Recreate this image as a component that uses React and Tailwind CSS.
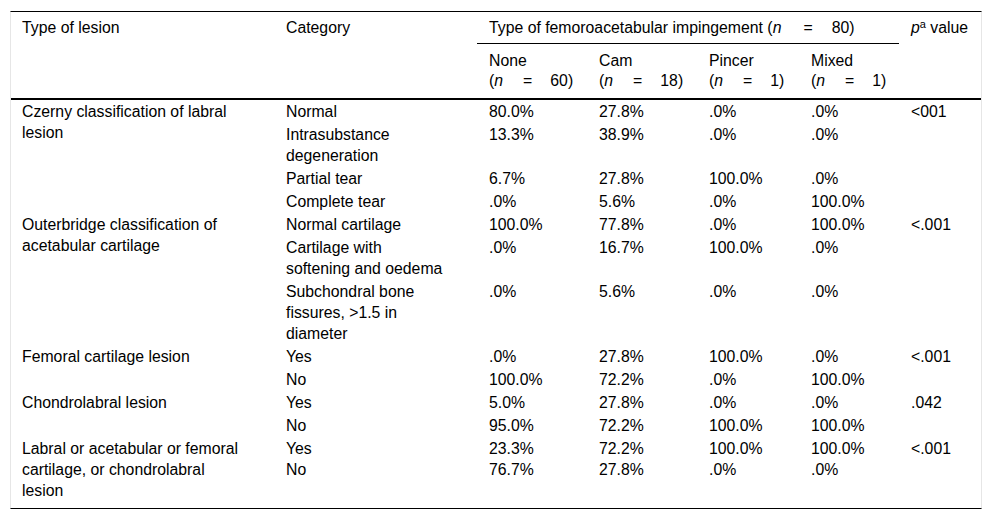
import React from "react";

const groups = [
  {
    label: ["Czerny classification of labral", "lesion"],
    p: "<001",
    rows: [
      [["Normal"], "80.0%", "27.8%", ".0%", ".0%"],
      [["Intrasubstance", "degeneration"], "13.3%", "38.9%", ".0%", ".0%"],
      [["Partial tear"], "6.7%", "27.8%", "100.0%", ".0%"],
      [["Complete tear"], ".0%", "5.6%", ".0%", "100.0%"],
    ],
  },
  {
    label: ["Outerbridge classification of", "acetabular cartilage"],
    p: "<.001",
    rows: [
      [["Normal cartilage"], "100.0%", "77.8%", ".0%", "100.0%"],
      [["Cartilage with", "softening and oedema"], ".0%", "16.7%", "100.0%", ".0%"],
      [["Subchondral bone", "fissures, >1.5 in", "diameter"], ".0%", "5.6%", ".0%", ".0%"],
    ],
  },
  {
    label: ["Femoral cartilage lesion"],
    p: "<.001",
    rows: [
      [["Yes"], ".0%", "27.8%", "100.0%", ".0%"],
      [["No"], "100.0%", "72.2%", ".0%", "100.0%"],
    ],
  },
  {
    label: ["Chondrolabral lesion"],
    p: ".042",
    rows: [
      [["Yes"], "5.0%", "27.8%", ".0%", ".0%"],
      [["No"], "95.0%", "72.2%", "100.0%", "100.0%"],
    ],
  },
  {
    label: ["Labral or acetabular or femoral", "cartilage, or chondrolabral", "lesion"],
    p: "<.001",
    last: true,
    rows: [
      [["Yes"], "23.3%", "72.2%", "100.0%", "100.0%"],
      [["No"], "76.7%", "27.8%", ".0%", ".0%"],
    ],
  },
];

function Lines({ lines }) {
  return (
    <>
      {lines.map((l, i) => (
        <div key={i} className="whitespace-nowrap">
          {l}
        </div>
      ))}
    </>
  );
}

function NCount({ v, a = 20, b = 18 }) {
  return (
    <span className="whitespace-nowrap">
      (<i>n</i>
      <span className="inline-block" style={{ marginLeft: a + "px", marginRight: b + "px" }}>
        =
      </span>
      {v})
    </span>
  );
}

function Group({ g }) {
  return (
    <div className={`flex ${g.last ? "pb-[6px]" : ""}`}>
      <div className="w-[263px] shrink-0 pl-[11px] py-[1px]">
        <Lines lines={g.label} />
      </div>
      <div className="flex flex-col">
        {g.rows.map((r, i) => (
          <div
            key={i}
            className={`flex ${g.last ? (i === 0 ? "pt-[1px]" : "") : "py-[1px]"}`}
          >
            <div className="w-[203px] pl-3">
              <Lines lines={r[0]} />
            </div>
            <div className="w-[110px] pl-3">{r[1]}</div>
            <div className="w-[110px] pl-3">{r[2]}</div>
            <div className="w-[102px] pl-3">{r[3]}</div>
            <div className="w-[100px] pl-3">{r[4]}</div>
            <div className="w-[82px] pl-3">{i === 0 ? g.p : ""}</div>
          </div>
        ))}
      </div>
    </div>
  );
}

export default function App() {
  return (
    <div
      className="w-[992px] h-[518px] bg-white pt-[11px] pl-[10px] text-[15.8px] leading-[21px] text-black"
      style={{ fontFamily: '"Liberation Sans", Arial, sans-serif' }}
    >
      <div className="w-[972px] border-t border-t-black border-b border-b-black border-x border-x-[#e6e6e6]">
        {/* Header */}
        <div className="flex border-b-2 border-b-black">
          <div className="w-[263px] shrink-0 pl-[11px] pt-[5px]">Type of lesion</div>
          <div className="w-[203px] shrink-0 pl-3 pt-[5px]">Category</div>
          <div className="w-[422px] shrink-0 flex flex-col">
            <div className="pl-3 pt-[5px] pb-[5px] border-b border-b-black whitespace-nowrap">
              Type of femoroacetabular impingement <NCount v="80" a={22} b={19} />
            </div>
            <div className="flex leading-[20px] pt-[7px] pb-[7px]">
              <div className="w-[110px] pl-3">
                <div>None</div>
                <NCount v="60" />
              </div>
              <div className="w-[110px] pl-3">
                <div>Cam</div>
                <NCount v="18" />
              </div>
              <div className="w-[102px] pl-3">
                <div>Pincer</div>
                <NCount v="1" />
              </div>
              <div className="w-[100px] pl-3">
                <div>Mixed</div>
                <NCount v="1" />
              </div>
            </div>
          </div>
          <div className="w-[82px] pl-3 pt-[5px] whitespace-nowrap">
            <i>p</i>
            <sup className="text-[11px]">a</sup> value
          </div>
        </div>
        {/* Body */}
        <div className="flex flex-col">
          {groups.map((g, i) => (
            <Group key={i} g={g} />
          ))}
        </div>
      </div>
    </div>
  );
}
